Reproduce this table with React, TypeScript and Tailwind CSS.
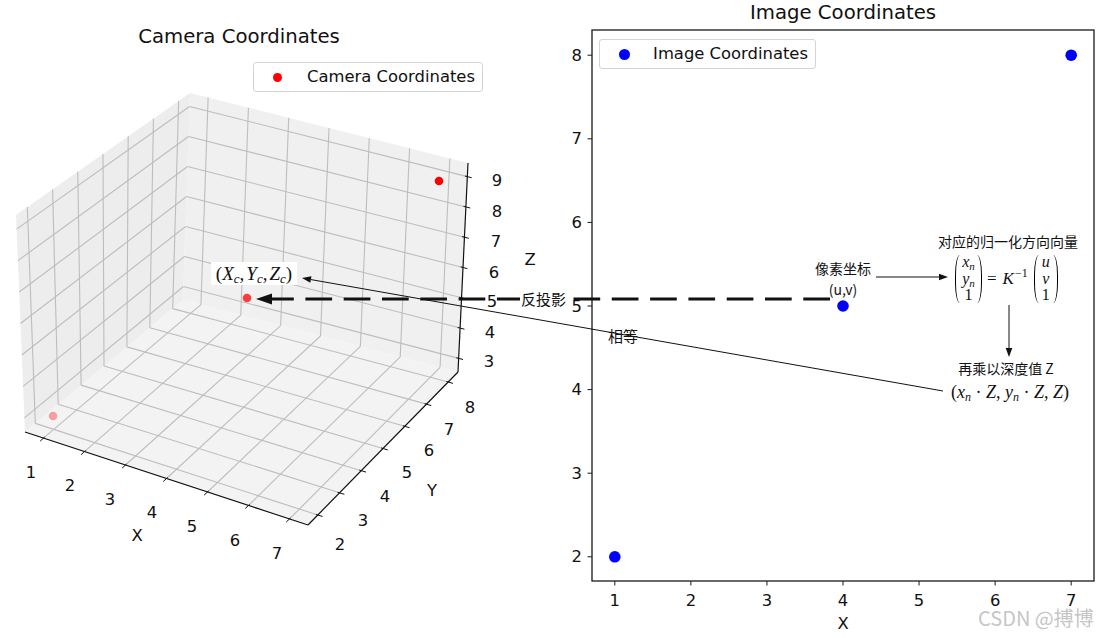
import React from 'react';

type Pt = [number, number];

// screen corners of the 3D box, keyed by (x,y,z) low/high
const CORNERS: Record<string, Pt> = {
  '000': [25, 432],
  '100': [308, 525],
  '110': [458, 372],
  '010': [183, 300],
  '001': [16, 215],
  '101': [311, 303],
  '111': [468, 163],
  '011': [190, 93],
};

const XL = 0.55, XH = 7.45, YL = 1.55, YH = 8.45, ZL = 2.55, ZH = 9.45;

const lerp = (a: Pt, b: Pt, t: number): Pt => [a[0] + (b[0] - a[0]) * t, a[1] + (b[1] - a[1]) * t];

function proj(x: number, y: number, z: number): Pt {
  const u = (x - XL) / (XH - XL);
  const v = (y - YL) / (YH - YL);
  const w = (z - ZL) / (ZH - ZL);
  const c = CORNERS;
  const bottom = lerp(lerp(c['000'], c['100'], u), lerp(c['010'], c['110'], u), v);
  const top = lerp(lerp(c['001'], c['101'], u), lerp(c['011'], c['111'], u), v);
  return lerp(bottom, top, w);
}

const unit = (a: Pt, b: Pt): Pt => {
  const dx = b[0] - a[0], dy = b[1] - a[1];
  const l = Math.hypot(dx, dy);
  return [dx / l, dy / l];
};

const poly = (pts: Pt[]) => pts.map(p => p.join(',')).join(' ');

const X_TICKS = [1, 2, 3, 4, 5, 6, 7];
const Y_TICKS = [2, 3, 4, 5, 6, 7, 8];
const Z_TICKS = [3, 4, 5, 6, 7, 8, 9];

const X_LABELS: Pt[] = [[31, 472], [70, 485], [110, 499], [152, 512], [192, 526], [235, 540], [277, 553]];
const Y_LABELS: Pt[] = [[340, 544], [363, 520], [385, 496], [407, 472], [429, 450], [449, 429], [470, 407]];
// ordered z = 3 .. 9
const Z_LABELS: Pt[] = [[489, 361], [490, 332], [492, 301], [494, 272], [496, 241], [497, 211], [497, 180]];

const FONT = "'DejaVu Sans', 'Liberation Sans', sans-serif";

function Line({ a, b, color = '#bdbdbd', w = 1.1 }: { a: Pt; b: Pt; color?: string; w?: number }) {
  return <line x1={a[0]} y1={a[1]} x2={b[0]} y2={b[1]} stroke={color} strokeWidth={w} />;
}

function Camera3D() {
  const grid: [Pt, Pt][] = [];
  Y_TICKS.forEach(y => grid.push([proj(XL, y, ZL), proj(XL, y, ZH)]));
  Z_TICKS.forEach(z => grid.push([proj(XL, YL, z), proj(XL, YH, z)]));
  X_TICKS.forEach(x => grid.push([proj(x, YH, ZL), proj(x, YH, ZH)]));
  Z_TICKS.forEach(z => grid.push([proj(XL, YH, z), proj(XH, YH, z)]));
  X_TICKS.forEach(x => grid.push([proj(x, YL, ZL), proj(x, YH, ZL)]));
  Y_TICKS.forEach(y => grid.push([proj(XL, y, ZL), proj(XH, y, ZL)]));

  const xOut = unit(proj(4, YH, ZL), proj(4, YL, ZL));
  const yOut = unit(proj(XL, 5, ZL), proj(XH, 5, ZL));
  const zOut = unit(proj(XL, YH, 6), proj(XH, YH, 6));

  const tick = (p: Pt, d: Pt, a: number, b: number): [Pt, Pt] => [
    [p[0] + d[0] * a, p[1] + d[1] * a],
    [p[0] + d[0] * b, p[1] + d[1] * b],
  ];

  return (
    <svg width={545} height={588} viewBox="0 50 545 588" className="block">
      {/* panes */}
      <polygon points={poly([proj(XL, YL, ZL), proj(XL, YH, ZL), proj(XL, YH, ZH), proj(XL, YL, ZH)])} fill="#ededed" />
      <polygon points={poly([proj(XL, YH, ZL), proj(XH, YH, ZL), proj(XH, YH, ZH), proj(XL, YH, ZH)])} fill="#f0f0f0" />
      <polygon points={poly([proj(XL, YL, ZL), proj(XH, YL, ZL), proj(XH, YH, ZL), proj(XL, YH, ZL)])} fill="#f3f3f3" />
      {grid.map(([a, b], i) => <Line key={i} a={a} b={b} />)}

      {/* axes */}
      <Line a={proj(XL, YL, ZL)} b={proj(XH, YL, ZL)} color="#111" w={1.2} />
      <Line a={proj(XH, YL, ZL)} b={proj(XH, YH, ZL)} color="#111" w={1.2} />
      <Line a={proj(XH, YH, ZL)} b={proj(XH, YH, ZH)} color="#111" w={1.2} />
      {X_TICKS.map(x => {
        const [a, b] = tick(proj(x, YL, ZL), xOut, -1.5, 4.5);
        return <Line key={'xt' + x} a={a} b={b} color="#111" w={1} />;
      })}
      {Y_TICKS.map(y => {
        const [a, b] = tick(proj(XH, y, ZL), yOut, -2, 5);
        return <Line key={'yt' + y} a={a} b={b} color="#111" w={1} />;
      })}
      {Z_TICKS.map(z => {
        const [a, b] = tick(proj(XH, YH, z), zOut, -2.5, 4.5);
        return <Line key={'zt' + z} a={a} b={b} color="#111" w={1} />;
      })}

      <g fontFamily={FONT} fontSize={16.4} fill="#111" textAnchor="middle" dominantBaseline="central">
        {X_TICKS.map((t, i) => <text key={'xl' + t} x={X_LABELS[i][0]} y={X_LABELS[i][1]}>{t}</text>)}
        {Y_TICKS.map((t, i) => <text key={'yl' + t} x={Y_LABELS[i][0]} y={Y_LABELS[i][1]}>{t}</text>)}
        {Z_TICKS.map((t, i) => <text key={'zl' + t} x={Z_LABELS[i][0]} y={Z_LABELS[i][1]}>{t}</text>)}
        <text x={137} y={535}>X</text>
        <text x={432} y={490}>Y</text>
        <text x={530} y={259}>Z</text>
      </g>

      {/* data points with depth shading */}
      <circle cx={53} cy={416} r={4.3} fill="#ff0000" fillOpacity={0.35} />
      <circle cx={247} cy={298} r={4.3} fill="#ff0000" fillOpacity={0.75} />
      <circle cx={439} cy={181} r={4.3} fill="#ff0000" />
    </svg>
  );
}

const XPX = (x: number) => 843 + (x - 4) * 76.06;
const YPX = (y: number) => 306 - (y - 5) * 83.6;

function Image2D() {
  return (
    <svg width={562} height={612} viewBox="545 26 562 612" className="block">
      <rect x={592} y={30} width={502} height={551} fill="white" stroke="#1a1a1a" strokeWidth={1.3} />
      {X_TICKS.map(x => (
        <g key={'x' + x}>
          <line x1={XPX(x)} y1={581} x2={XPX(x)} y2={585.5} stroke="#1a1a1a" strokeWidth={1} />
          <text x={XPX(x)} y={600} fontFamily={FONT} fontSize={16.4} fill="#111" textAnchor="middle" dominantBaseline="central">{x}</text>
        </g>
      ))}
      {Y_TICKS.map(y => (
        <g key={'y' + y}>
          <line x1={592} y1={YPX(y)} x2={587.5} y2={YPX(y)} stroke="#1a1a1a" strokeWidth={1} />
          <text x={582} y={YPX(y)} fontFamily={FONT} fontSize={16.4} fill="#111" textAnchor="end" dominantBaseline="central">{y}</text>
        </g>
      ))}
      <text x={843} y={623} fontFamily={FONT} fontSize={16.4} fill="#111" textAnchor="middle" dominantBaseline="central">X</text>
      {[[1, 2], [4, 5], [7, 8]].map(([x, y]) => (
        <circle key={x} cx={XPX(x)} cy={YPX(y)} r={5.8} fill="#0000ff" />
      ))}
    </svg>
  );
}

function Legend({ left, top, width, color, dot, label }: { left: string; top: string; width: string; color: string; dot: string; label: string }) {
  return (
    <div className={`absolute ${left} ${top} ${width} h-[30px] flex items-center rounded-[3px] border border-[#d4d4d4] bg-white/80`}>
      <span className={`ml-[19px] ${dot} rounded-full ${color}`} />
      <span className="ml-auto mr-[7px] text-[16.4px] leading-none">{label}</span>
    </div>
  );
}

function Paren({ side }: { side: 'l' | 'r' }) {
  return side === 'l' ? (
    <span className="block w-[5px] h-[48px] border-l-[1.3px] border-black rounded-tl-[6px_24px] rounded-bl-[6px_24px]" />
  ) : (
    <span className="block w-[5px] h-[48px] border-r-[1.3px] border-black rounded-tr-[6px_24px] rounded-br-[6px_24px]" />
  );
}

function Column({ items, width }: { items: React.ReactNode[]; width: string }) {
  return (
    <span className={`flex flex-col items-center ${width} text-[16px] leading-[16.5px]`}>
      {items.map((it, i) => <span key={i}>{it}</span>)}
    </span>
  );
}

function Annotations() {
  const tip: Pt = [302, 278];
  const tail: Pt = [943, 391];
  const d = unit(tail, tip);
  const base: Pt = [tip[0] - d[0] * 9, tip[1] - d[1] * 9];
  const n: Pt = [-d[1] * 3.3, d[0] * 3.3];
  const cjk = "font-['Noto_Sans_CJK_SC','Noto_Sans',sans-serif]";
  const serif = "font-['Liberation_Serif','DejaVu_Serif',serif]";

  return (
    <div className="pointer-events-none absolute inset-0">
      <svg width={1107} height={638} viewBox="0 0 1107 638" className="absolute inset-0">
        <line x1={830} y1={299} x2={270} y2={299} stroke="#111" strokeWidth={3} strokeDasharray="26.7 11.6" />
        <polygon points="256,299 272,293.5 272,304.5" fill="#111" />
        <line x1={tail[0]} y1={tail[1]} x2={base[0]} y2={base[1]} stroke="#111" strokeWidth={1} />
        <polygon points={poly([tip, [base[0] + n[0], base[1] + n[1]], [base[0] - n[0], base[1] - n[1]]])} fill="#111" />
        <line x1={876} y1={277} x2={940} y2={277} stroke="#111" strokeWidth={1} />
        <polygon points="948,277 939,273.7 939,280.3" fill="#111" />
        <line x1={1009} y1={305} x2={1009} y2={349} stroke="#111" strokeWidth={1} />
        <polygon points="1009,357 1005.7,348 1012.3,348" fill="#111" />
      </svg>

      <span className={`absolute left-[520px] top-[289px] bg-white px-[1px] text-[15px] leading-[20px] ${cjk}`}>反投影</span>
      <span className={`absolute left-[608px] top-[326px] text-[15px] leading-[20px] ${cjk}`}>相等</span>

      <div className={`absolute left-[211px] top-[262px] w-[86px] h-[23px] bg-white flex items-center justify-center text-[19px] leading-none ${serif}`}>
        <span>
          (<i>X</i><sub className="text-[13px]"><i>c</i></sub><span className="mr-[2px]">,</span>
          <i>Y</i><sub className="text-[13px]"><i>c</i></sub><span className="mr-[2px]">,</span>
          <i>Z</i><sub className="text-[13px]"><i>c</i></sub>)
        </span>
      </div>

      <div className={`absolute left-[803px] top-[258px] w-[80px] text-center text-[14px] leading-[21px] ${cjk}`}>
        <div>像素坐标</div>
        <div>(u,v)</div>
      </div>

      <div className={`absolute left-[928px] top-[231px] w-[160px] text-center text-[14px] leading-[20px] ${cjk}`}>对应的归一化方向向量</div>

      <div className={`absolute left-[955px] top-[255px] h-[48px] flex items-center ${serif}`}>
        <Paren side="l" />
        <Column width="w-[17px]" items={[<i>x<sub className="text-[11px]">n</sub></i>, <i>y<sub className="text-[11px]">n</sub></i>, '1']} />
        <Paren side="r" />
        <span className="ml-[5px] mr-[6px] text-[17px]">=</span>
        <span className="text-[17px] italic">K</span>
        <span className="ml-[1px] mr-[6px] -mt-[12px] text-[12px]">−1</span>
        <Paren side="l" />
        <Column width="w-[14px]" items={[<i>u</i>, <i>v</i>, '1']} />
        <Paren side="r" />
      </div>

      <div className={`absolute left-[926px] top-[358px] w-[160px] text-center text-[14px] leading-[20px] ${cjk}`}>再乘以深度值 Z</div>

      <div className={`absolute left-[930px] top-[381px] w-[160px] text-center text-[18px] leading-[22px] ${serif}`}>
        (<i>x</i><sub className="text-[12px]"><i>n</i></sub> · <i>Z</i>, <i>y</i><sub className="text-[12px]"><i>n</i></sub> · <i>Z</i>, <i>Z</i>)
      </div>

      <span className={`absolute left-[978px] top-[612px] text-[20px] leading-[12px] text-[#c6c6c6] ${cjk}`}>CSDN @搏博</span>
    </div>
  );
}

export default function App() {
  return (
    <div className="relative w-[1107px] h-[638px] overflow-hidden bg-white text-[#111] font-['DejaVu_Sans','Liberation_Sans',sans-serif]">
      <div className="flex h-full">
        <section className="relative w-[545px] h-full flex flex-col">
          <h2 className="w-[478px] h-[50px] pt-[24px] text-center text-[19.7px] leading-[26px]">Camera Coordinates</h2>
          <Camera3D />
          <Legend left="left-[253px]" top="top-[62px]" width="w-[230px]" color="bg-[#ff0000]" dot="w-[9px] h-[9px]" label="Camera Coordinates" />
        </section>
        <section className="relative flex-1 h-full flex flex-col">
          <h2 className="h-[26px] pl-[34px] text-center text-[19.7px] leading-[26px]">Image Coordinates</h2>
          <Image2D />
          <Legend left="left-[54px]" top="top-[39px]" width="w-[217px]" color="bg-[#0000ff]" dot="w-[11px] h-[11px]" label="Image Coordinates" />
        </section>
      </div>
      <Annotations />
    </div>
  );
}
